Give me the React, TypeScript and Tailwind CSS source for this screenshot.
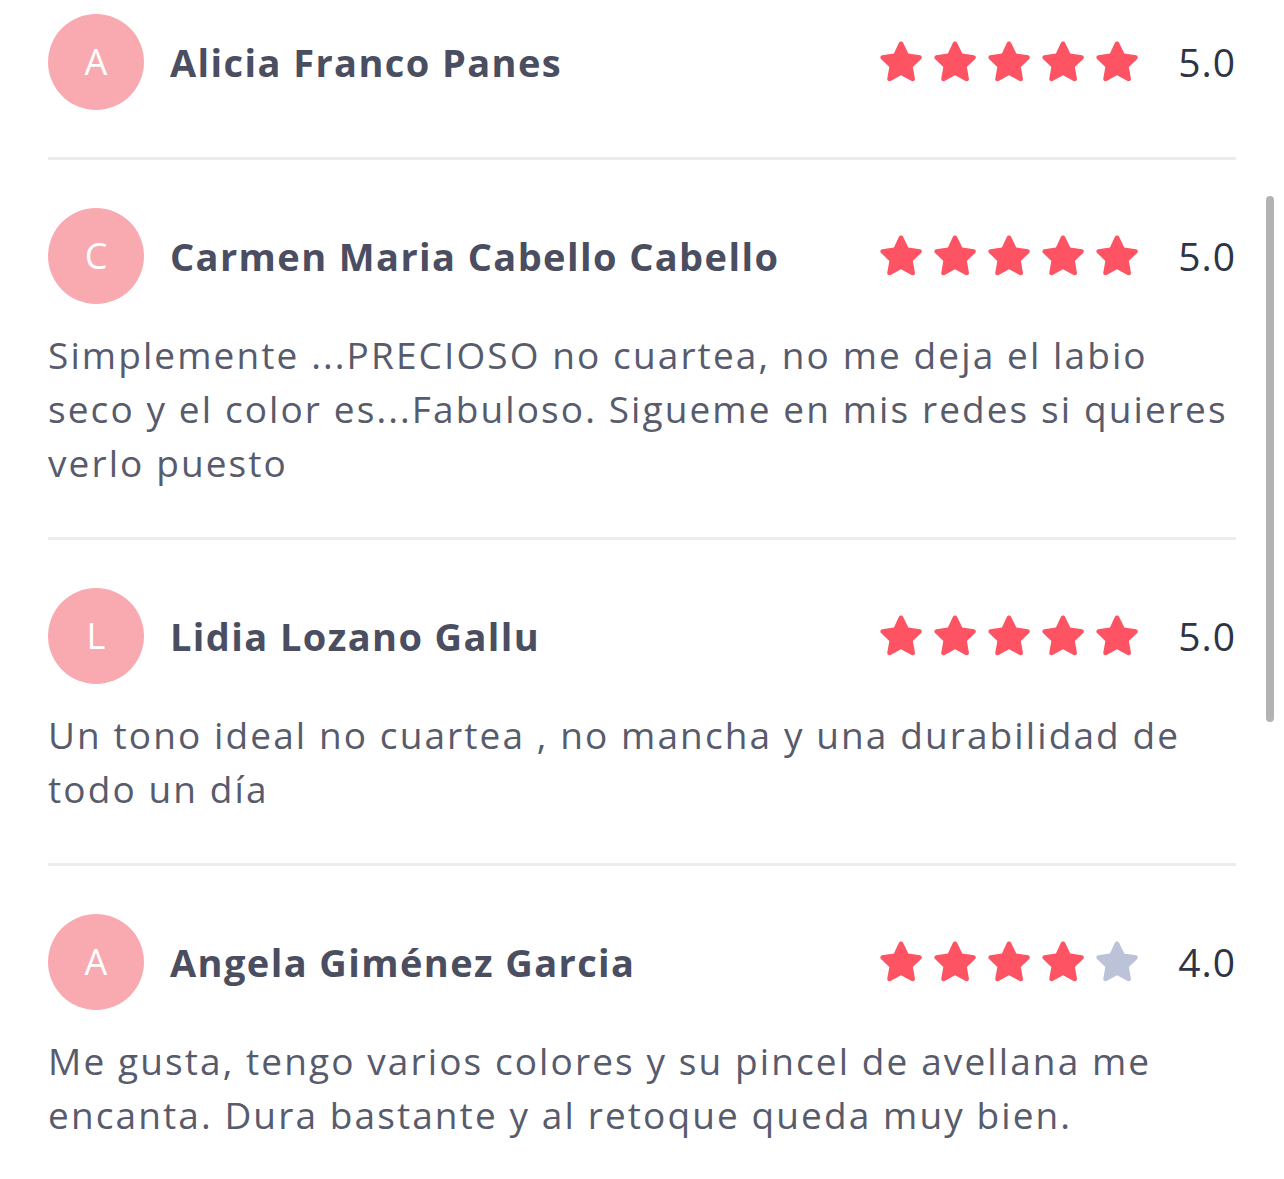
import React from "react";

type Review = {
    initial: string;
    name: string;
    rating: number;
    text?: string;
};

const reviews: Review[] = [
    { initial: "A", name: "Alicia Franco Panes", rating: 5 },
    {
        initial: "C",
        name: "Carmen Maria Cabello Cabello",
        rating: 5,
        text: "Simplemente ...PRECIOSO no cuartea, no me deja el labio seco y el color es...Fabuloso. Sigueme en mis redes si quieres verlo puesto",
    },
    {
        initial: "L",
        name: "Lidia Lozano Gallu",
        rating: 5,
        text: "Un tono ideal no cuartea , no mancha y una durabilidad de todo un día",
    },
    {
        initial: "A",
        name: "Angela Giménez Garcia",
        rating: 4,
        text: "Me gusta, tengo varios colores y su pincel de avellana me encanta. Dura bastante y al retoque queda muy bien.",
    },
];

function Star({ filled }: { filled: boolean }) {
    return (
        <svg
            viewBox="0 0 24 24"
            className={filled ? "h-[50px] w-[50px] fill-[#fd5363]" : "h-[50px] w-[50px] fill-[#bcc2d8]"}
        >
            <path d="M12 2.2c.4 0 .8.2 1 .6l2.5 5.1 5.6.8c.9.1 1.2 1.2.6 1.8l-4 3.9 1 5.6c.1.9-.8 1.5-1.6 1.1L12 18.4l-5 2.7c-.8.4-1.7-.2-1.6-1.1l1-5.6-4-3.9c-.6-.6-.3-1.7.6-1.8l5.6-.8L11 2.8c.2-.4.6-.6 1-.6z" />
        </svg>
    );
}

function ReviewItem({ review, first }: { review: Review; first: boolean }) {
    return (
        <div className={first ? "pt-[14px] pb-[47px]" : "pt-[48px] pb-[47px]"}>
            <div className="flex items-center">
                <div className="flex h-[96px] w-[96px] shrink-0 items-center justify-center rounded-full bg-[#f9aab0] text-[36px] text-white">
                    {review.initial}
                </div>
                <div className="ml-[26px] flex-1 text-[38px] font-bold tracking-[1.4px] text-[#4a4e60]">
                    {review.name}
                </div>
                <div className="flex items-center gap-[4px]">
                    {[1, 2, 3, 4, 5].map((i) => (
                        <Star key={i} filled={i <= review.rating} />
                    ))}
                </div>
                <div className="ml-[30px] w-[64px] text-right text-[39px] tracking-[1px] text-[#2e3345]">
                    {review.rating.toFixed(1)}
                </div>
            </div>
            {review.text && (
                <p className="mt-[24px] text-[37px] leading-[54px] tracking-[2.1px] text-[#575b6c]">{review.text}</p>
            )}
        </div>
    );
}

export default function App() {
    return (
        <div className="relative h-[1179px] w-[1284px] overflow-hidden bg-white font-['Open_Sans',sans-serif]">
            <div className="pl-[48px] pr-[48px]">
                {reviews.map((r, idx) => (
                    <div key={idx}>
                        {idx > 0 && <div className="h-[3px] bg-[#ececef]" />}
                        <ReviewItem review={r} first={idx === 0} />
                    </div>
                ))}
            </div>
            {/* scrollbar thumb */}
            <div className="absolute right-[10px] top-[196px] h-[526px] w-[8px] rounded-full bg-[#b3b3b3]" />
        </div>
    );
}
